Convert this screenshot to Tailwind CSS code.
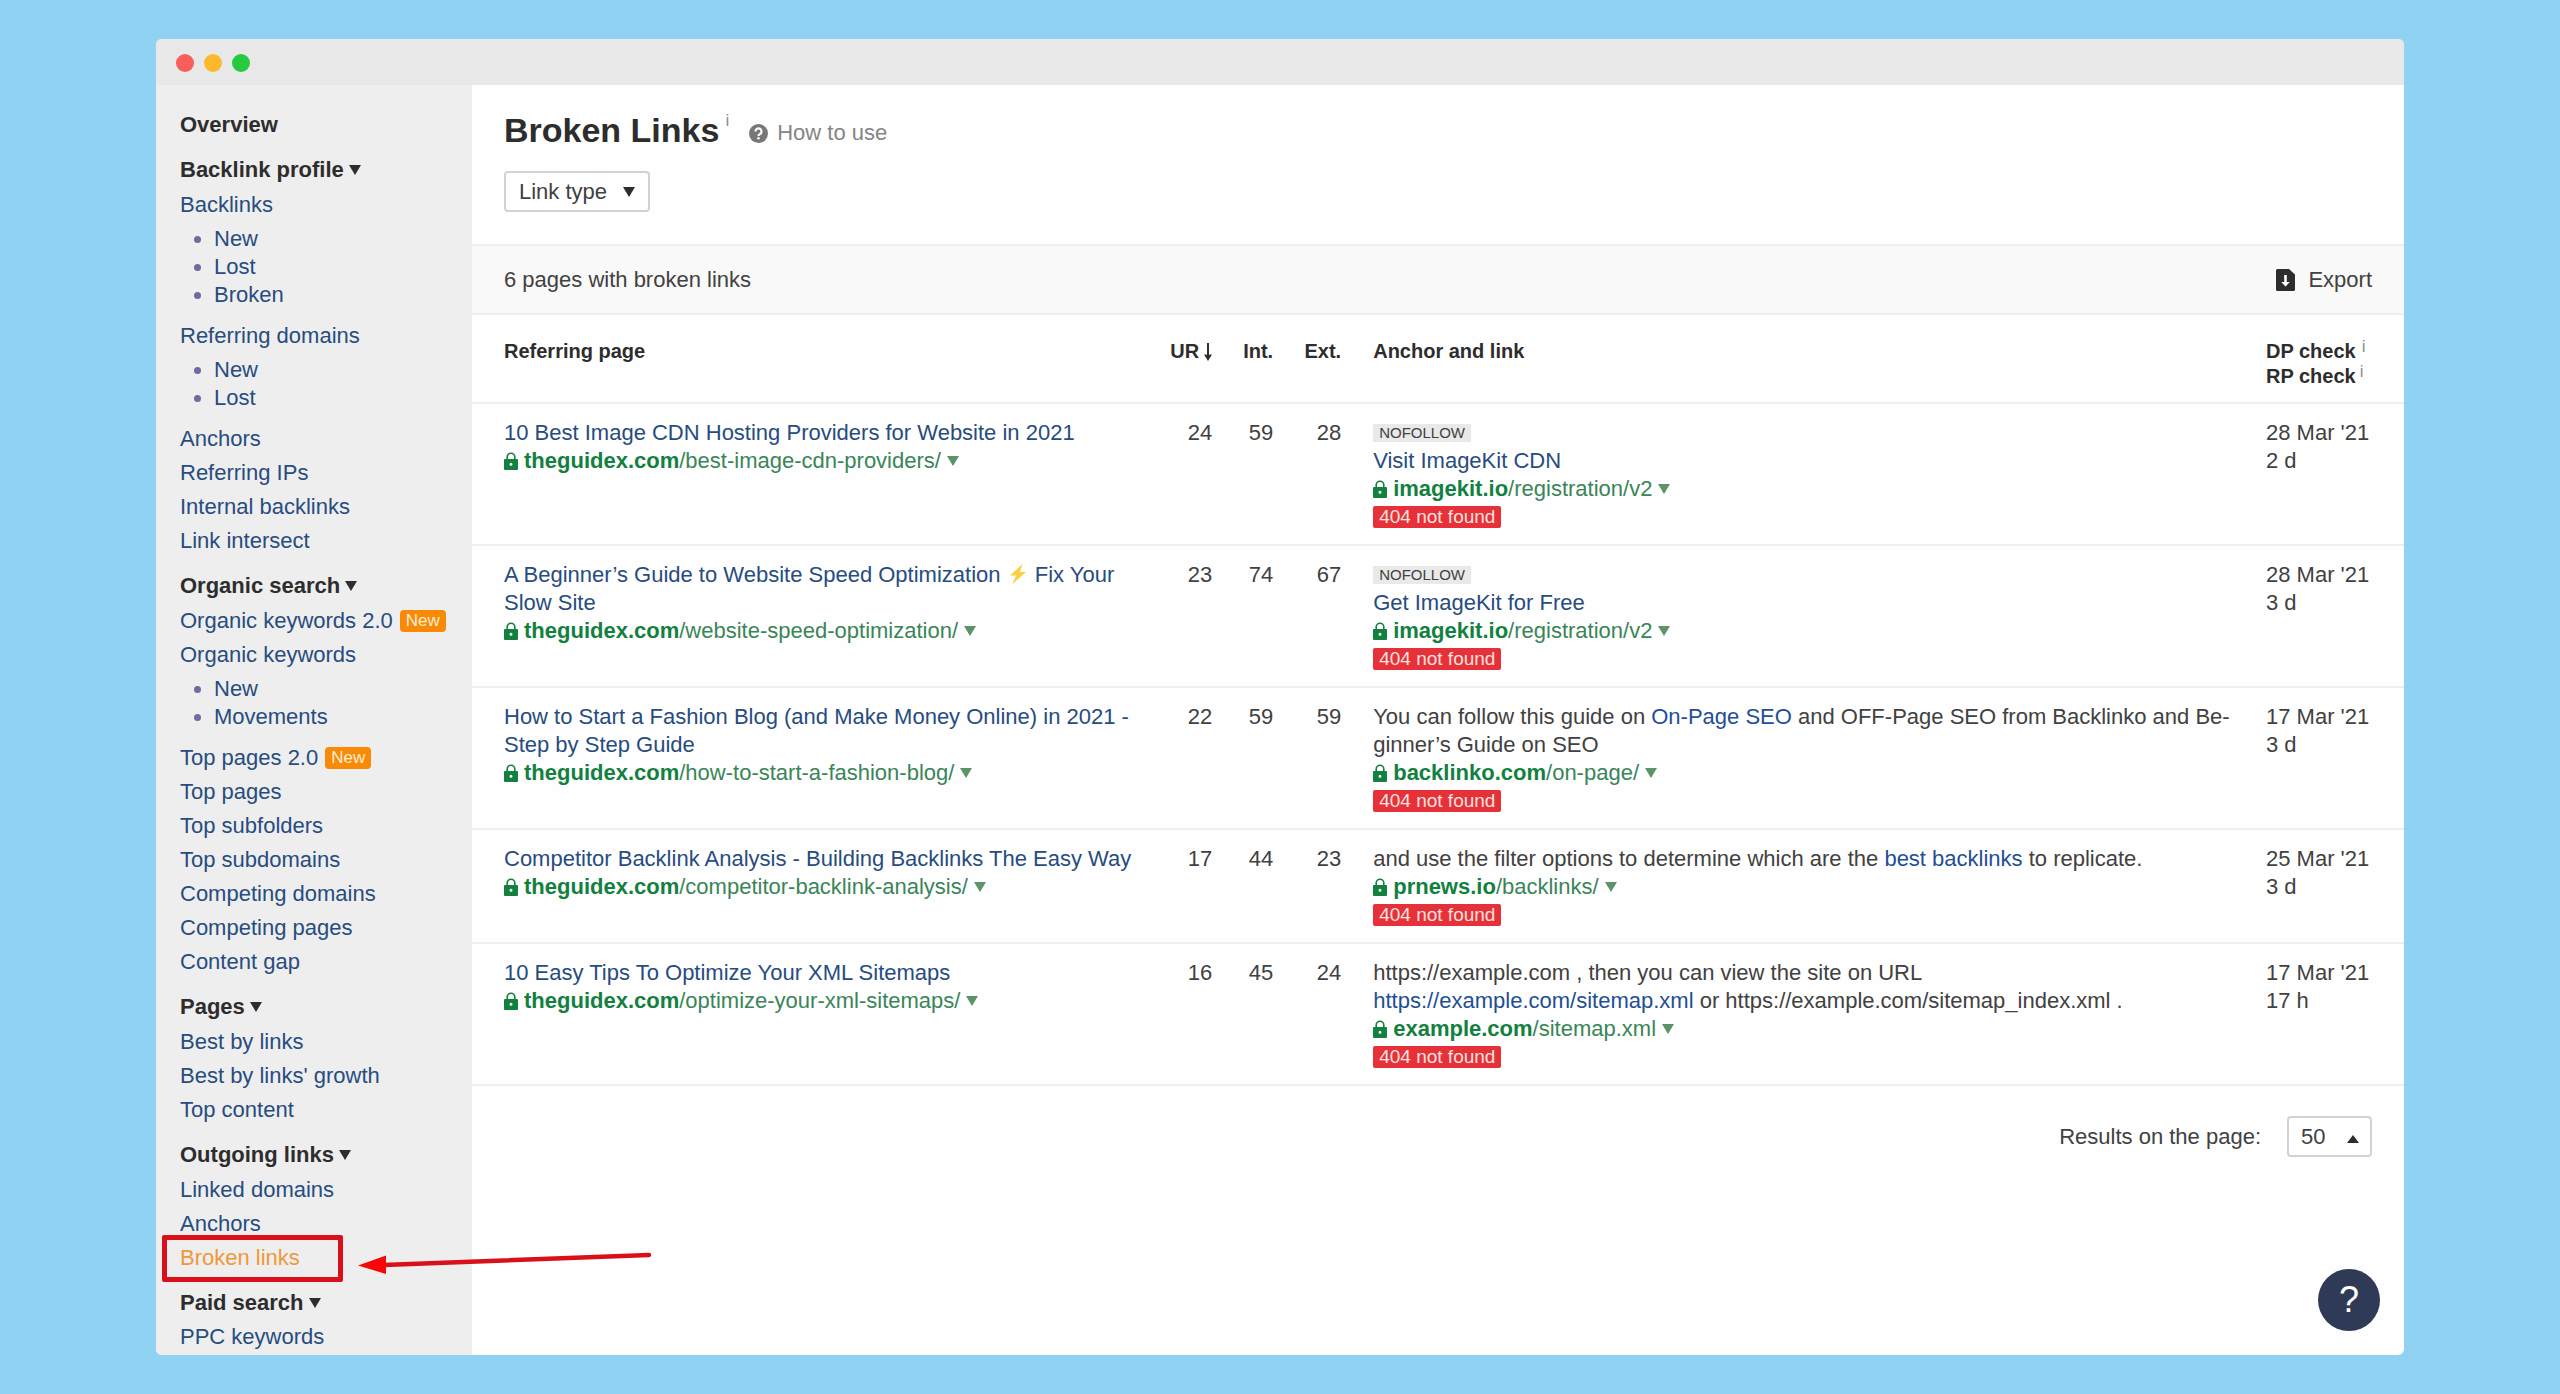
<!DOCTYPE html>
<html lang="en">
  <head>
    <meta charset="UTF-8" />
    <meta name="viewport" content="width=device-width, initial-scale=1.0" />
    <title>Broken Links</title>
    <script src="https://cdn.jsdelivr.net/npm/@tailwindcss/browser@4"></script>
  </head>
  <body class="bg-[#90d2f1] min-h-screen flex px-39 py-[39px] font-['Liberation_Sans',Arial,sans-serif] text-[22px] leading-7 text-[#414141]">
    <!-- Shared icons -->
    <svg class="hidden">
      <symbol id="lock" viewBox="0 0 14 18">
        <path d="M3.2 8V5a3.8 3.8 0 0 1 7.6 0v3" fill="none" stroke="currentColor" stroke-width="1.6" />
        <path fill-rule="evenodd" d="M1 7h12a1 1 0 0 1 1 1v9a1 1 0 0 1-1 1H1a1 1 0 0 1-1-1V8a1 1 0 0 1 1-1Zm6 3.8a1.5 1.5 0 1 0 0 3 1.5 1.5 0 0 0 0-3Z" fill="currentColor" />
      </symbol>
      <symbol id="down" viewBox="0 0 12 10">
        <path d="M0 0h12L6 10Z" fill="currentColor" />
      </symbol>
    </svg>

    <div class="flex-1 min-w-0 flex flex-col bg-[#fefefe] rounded-md overflow-hidden">
      <!-- Window bar -->
      <header class="h-[46px] shrink-0 bg-[#e8e8e8] flex items-center gap-[10px] pl-5 pt-[2px]">
        <span class="size-[18px] rounded-full bg-[#f95f5a]"></span>
        <span class="size-[18px] rounded-full bg-[#fcb92b]"></span>
        <span class="size-[18px] rounded-full bg-[#27c93f]"></span>
      </header>

      <div class="flex-1 flex">
        <!-- Sidebar -->
        <nav class="w-[316px] shrink-0 bg-[#eeeeee] pl-6 pt-[26px] flex flex-col gap-[17px] text-[#274c80] whitespace-nowrap">
          <a href="#" class="font-bold text-[#2d2d2d]">Overview</a>

          <section>
            <button class="font-bold text-[#2d2d2d] flex items-center gap-[5px] mb-[7px]">Backlink profile <svg class="w-3 h-2.5"><use href="#down" /></svg></button>
            <ul class="flex flex-col gap-1.5">
              <li>
                <a href="#">Backlinks</a>
                <ul class="mt-1.5 mb-[7px] pl-[34px] list-disc marker:text-[#6f6ba0]">
                  <li><a href="#">New</a></li>
                  <li><a href="#">Lost</a></li>
                  <li><a href="#">Broken</a></li>
                </ul>
              </li>
              <li>
                <a href="#">Referring domains</a>
                <ul class="mt-1.5 mb-[7px] pl-[34px] list-disc marker:text-[#6f6ba0]">
                  <li><a href="#">New</a></li>
                  <li><a href="#">Lost</a></li>
                </ul>
              </li>
              <li><a href="#">Anchors</a></li>
              <li><a href="#">Referring IPs</a></li>
              <li><a href="#">Internal backlinks</a></li>
              <li><a href="#">Link intersect</a></li>
            </ul>
          </section>

          <section>
            <button class="font-bold text-[#2d2d2d] flex items-center gap-[5px] mb-[7px]">Organic search <svg class="w-3 h-2.5"><use href="#down" /></svg></button>
            <ul class="flex flex-col gap-1.5">
              <li class="flex items-center gap-[7px]"><a href="#">Organic keywords 2.0</a><span class="bg-[#f98a07] text-[#ffeed2] text-[17px] leading-[22px] px-1.5 rounded">New</span></li>
              <li>
                <a href="#">Organic keywords</a>
                <ul class="mt-1.5 mb-[7px] pl-[34px] list-disc marker:text-[#6f6ba0]">
                  <li><a href="#">New</a></li>
                  <li><a href="#">Movements</a></li>
                </ul>
              </li>
              <li class="flex items-center gap-[7px]"><a href="#">Top pages 2.0</a><span class="bg-[#f98a07] text-[#ffeed2] text-[17px] leading-[22px] px-1.5 rounded">New</span></li>
              <li><a href="#">Top pages</a></li>
              <li><a href="#">Top subfolders</a></li>
              <li><a href="#">Top subdomains</a></li>
              <li><a href="#">Competing domains</a></li>
              <li><a href="#">Competing pages</a></li>
              <li><a href="#">Content gap</a></li>
            </ul>
          </section>

          <section>
            <button class="font-bold text-[#2d2d2d] flex items-center gap-[5px] mb-[7px]">Pages <svg class="w-3 h-2.5"><use href="#down" /></svg></button>
            <ul class="flex flex-col gap-1.5">
              <li><a href="#">Best by links</a></li>
              <li><a href="#">Best by links' growth</a></li>
              <li><a href="#">Top content</a></li>
            </ul>
          </section>

          <section>
            <button class="font-bold text-[#2d2d2d] flex items-center gap-[5px] mb-[7px]">Outgoing links <svg class="w-3 h-2.5"><use href="#down" /></svg></button>
            <ul class="flex flex-col gap-1.5">
              <li><a href="#">Linked domains</a></li>
              <li><a href="#">Anchors</a></li>
              <li class="relative">
                <a href="#" class="text-[#f0983a]">Broken links</a>
                <!-- Highlight box and arrow -->
                <span class="absolute -left-[18px] -top-[9px] w-[181px] h-[47px] border-[5px] border-[#d90f19] rounded-xs"></span>
                <svg class="absolute left-[178px] top-2 w-[296px] h-6" viewBox="0 0 296 24">
                  <path d="M26 13 291 3" stroke="#d90f19" stroke-width="4.500" stroke-linecap="round" />
                  <path d="M0 13.500 28 3.500v18.500Z" fill="#f80708" />
                </svg>
              </li>
            </ul>
          </section>

          <section>
            <button class="font-bold text-[#2d2d2d] flex items-center gap-[5px] mb-1.5">Paid search <svg class="w-3 h-2.5"><use href="#down" /></svg></button>
            <ul>
              <li><a href="#">PPC keywords</a></li>
            </ul>
          </section>
        </nav>

        <main class="flex-1 min-w-0 flex flex-col">
          <div class="px-8 pt-6 pb-8">
            <div class="flex items-center">
              <h1 class="text-[34px] leading-[42px] font-bold text-[#2d2d2d]">Broken Links</h1>
              <span class="self-start pt-0.5 pl-1.5 text-[17px] leading-5 text-[#8f8f8f]">i</span>
              <a href="#" class="ml-5 mt-1.5 flex items-center gap-[9px] text-[#858585]">
                <svg class="size-[19px]" viewBox="0 0 19 19">
                  <circle cx="9.500" cy="9.500" r="9.500" fill="#777" />
                  <path d="M6.500 7.400a3 3 0 1 1 4.500 2.600c-1 .6-1.500 1-1.500 2" fill="none" stroke="#fff" stroke-width="2.200" />
                  <circle cx="9.500" cy="14.300" r="1.300" fill="#fff" />
                </svg>
                How to use
              </a>
            </div>
            <button class="mt-5 h-[41px] flex items-center gap-4 pl-[13px] pr-[13px] border-2 border-[#d2d2d2] rounded bg-white">Link type <svg class="w-3 h-2.5 text-[#2d2d2d]"><use href="#down" /></svg></button>
          </div>

          <div class="h-[71px] px-8 flex items-center justify-between bg-[#f9f9f9] border-y-2 border-[#eeeeee]">
            <span>6 pages with broken links</span>
            <button class="flex items-center gap-[13px]">
              <svg class="w-[19px] h-[22px]" viewBox="0 0 19 22">
                <path d="M1.500 0H13l6 5.500v15a1.500 1.500 0 0 1-1.500 1.500h-16A1.500 1.500 0 0 1 0 20.500v-19A1.500 1.500 0 0 1 1.500 0Z" fill="#2d2d2d" />
                <path d="M8.200 6h2.600v7h3l-4.300 4.500L5.200 13h3Z" fill="#fff" />
              </svg>
              Export
            </button>
          </div>

          <table class="table-fixed w-full text-left">
            <colgroup>
              <col class="w-[35%]" />
              <col class="w-16" />
              <col class="w-[61px]" />
              <col class="w-[68px]" />
              <col />
              <col class="w-[138px]" />
            </colgroup>
            <thead class="text-xl leading-[25px] text-[#2d2d2d]">
              <tr class="h-[88px] align-top border-b-2 border-[#eeeeee]">
                <th class="pt-6 pl-8">Referring page</th>
                <th class="pt-6">
                  <span class="flex items-center justify-end gap-[5px]">UR
                    <svg class="w-2 h-[18px]" viewBox="0 0 8 18"><path d="M4 0v14" stroke="currentColor" stroke-width="2" /><path d="M0 11.500c2 0 3 .5 4 .5s2-.5 4-.5L4 18Z" fill="currentColor" /></svg>
                  </span>
                </th>
                <th class="pt-6 text-right">Int.</th>
                <th class="pt-6 text-right">Ext.</th>
                <th class="pt-6 pl-8">Anchor and link</th>
                <th class="pt-6 whitespace-nowrap">
                  <div class="flex gap-1.5">DP check <span class="text-[17px] leading-4 font-normal text-[#8f8f8f]">i</span></div>
                  <div class="flex gap-1">RP check <span class="text-[17px] leading-4 font-normal text-[#8f8f8f]">i</span></div>
                </th>
              </tr>
            </thead>
            <tbody>
              <tr class="align-top border-b-2 border-[#eeeeee]">
                <td class="pt-[15px] pb-[13px] pl-8 pr-2">
                  <a href="#" class="text-[#274c80]">10 Best Image CDN Hosting Providers for Website in 2021</a>
                  <div class="flex items-center text-[#3a8558]"><svg class="w-3.5 h-[18px] mr-1.5 text-[#12813f]"><use href="#lock" /></svg><a href="#"><b class="text-[#12813f]">theguidex.com</b>/best-image-cdn-providers/</a><svg class="w-3 h-2.5 ml-1.5 text-[#5c9467]"><use href="#down" /></svg></div>
                </td>
                <td class="pt-[15px] pb-[13px] text-right">24</td>
                <td class="pt-[15px] pb-[13px] text-right">59</td>
                <td class="pt-[15px] pb-[13px] text-right">28</td>
                <td class="pt-[15px] pb-[13px] pl-8 pr-8">
                  <div class="h-7 flex items-center"><span class="bg-[#e9e9e9] text-[15px] leading-[18px] px-1.5">NOFOLLOW</span></div>
                  <a href="#" class="text-[#274c80]">Visit ImageKit CDN</a>
                  <div class="flex items-center text-[#3a8558]"><svg class="w-3.5 h-[18px] mr-1.5 text-[#12813f]"><use href="#lock" /></svg><a href="#"><b class="text-[#12813f]">imagekit.io</b>/registration/v2</a><svg class="w-3 h-2.5 ml-1.5 text-[#5c9467]"><use href="#down" /></svg></div>
                  <div class="h-7 flex items-center"><span class="bg-[#e6303a] text-[#ffe3de] text-[19px] leading-[22px] px-1.5 rounded-xs">404 not found</span></div>
                </td>
                <td class="pt-[15px] pb-[13px]">28 Mar '21<br />2 d</td>
              </tr>
              <tr class="align-top border-b-2 border-[#eeeeee]">
                <td class="pt-[15px] pb-[13px] pl-8 pr-2">
                  <a href="#" class="text-[#274c80]">A Beginner’s Guide to Website Speed Optimization <svg class="inline mx-0.5 w-[18px] h-5 align-[-2px]" viewBox="0 0 18 20"><path d="M13.500 0 1 11.500h6L3.500 20 17 8h-6Z" fill="#f8cf45" /></svg> Fix Your Slow Site</a>
                  <div class="flex items-center text-[#3a8558]"><svg class="w-3.5 h-[18px] mr-1.5 text-[#12813f]"><use href="#lock" /></svg><a href="#"><b class="text-[#12813f]">theguidex.com</b>/website-speed-optimization/</a><svg class="w-3 h-2.5 ml-1.5 text-[#5c9467]"><use href="#down" /></svg></div>
                </td>
                <td class="pt-[15px] pb-[13px] text-right">23</td>
                <td class="pt-[15px] pb-[13px] text-right">74</td>
                <td class="pt-[15px] pb-[13px] text-right">67</td>
                <td class="pt-[15px] pb-[13px] pl-8 pr-8">
                  <div class="h-7 flex items-center"><span class="bg-[#e9e9e9] text-[15px] leading-[18px] px-1.5">NOFOLLOW</span></div>
                  <a href="#" class="text-[#274c80]">Get ImageKit for Free</a>
                  <div class="flex items-center text-[#3a8558]"><svg class="w-3.5 h-[18px] mr-1.5 text-[#12813f]"><use href="#lock" /></svg><a href="#"><b class="text-[#12813f]">imagekit.io</b>/registration/v2</a><svg class="w-3 h-2.5 ml-1.5 text-[#5c9467]"><use href="#down" /></svg></div>
                  <div class="h-7 flex items-center"><span class="bg-[#e6303a] text-[#ffe3de] text-[19px] leading-[22px] px-1.5 rounded-xs">404 not found</span></div>
                </td>
                <td class="pt-[15px] pb-[13px]">28 Mar '21<br />3 d</td>
              </tr>
              <tr class="align-top border-b-2 border-[#eeeeee]">
                <td class="pt-[15px] pb-[13px] pl-8 pr-2">
                  <a href="#" class="text-[#274c80]">How to Start a Fashion Blog (and Make Money Online) in 2021 - Step by Step Guide</a>
                  <div class="flex items-center text-[#3a8558]"><svg class="w-3.5 h-[18px] mr-1.5 text-[#12813f]"><use href="#lock" /></svg><a href="#"><b class="text-[#12813f]">theguidex.com</b>/how-to-start-a-fashion-blog/</a><svg class="w-3 h-2.5 ml-1.5 text-[#5c9467]"><use href="#down" /></svg></div>
                </td>
                <td class="pt-[15px] pb-[13px] text-right">22</td>
                <td class="pt-[15px] pb-[13px] text-right">59</td>
                <td class="pt-[15px] pb-[13px] text-right">59</td>
                <td class="pt-[15px] pb-[13px] pl-8 pr-8">
                  You can follow this guide on <a href="#" class="text-[#1f4f96]">On-Page SEO</a> and OFF-Page SEO from Backlinko and Be&shy;ginner’s Guide on SEO
                  <div class="flex items-center text-[#3a8558]"><svg class="w-3.5 h-[18px] mr-1.5 text-[#12813f]"><use href="#lock" /></svg><a href="#"><b class="text-[#12813f]">backlinko.com</b>/on-page/</a><svg class="w-3 h-2.5 ml-1.5 text-[#5c9467]"><use href="#down" /></svg></div>
                  <div class="h-7 flex items-center"><span class="bg-[#e6303a] text-[#ffe3de] text-[19px] leading-[22px] px-1.5 rounded-xs">404 not found</span></div>
                </td>
                <td class="pt-[15px] pb-[13px]">17 Mar '21<br />3 d</td>
              </tr>
              <tr class="align-top border-b-2 border-[#eeeeee]">
                <td class="pt-[15px] pb-[13px] pl-8 pr-2">
                  <a href="#" class="text-[#274c80]">Competitor Backlink Analysis - Building Backlinks The Easy Way</a>
                  <div class="flex items-center text-[#3a8558]"><svg class="w-3.5 h-[18px] mr-1.5 text-[#12813f]"><use href="#lock" /></svg><a href="#"><b class="text-[#12813f]">theguidex.com</b>/competitor-backlink-analysis/</a><svg class="w-3 h-2.5 ml-1.5 text-[#5c9467]"><use href="#down" /></svg></div>
                </td>
                <td class="pt-[15px] pb-[13px] text-right">17</td>
                <td class="pt-[15px] pb-[13px] text-right">44</td>
                <td class="pt-[15px] pb-[13px] text-right">23</td>
                <td class="pt-[15px] pb-[13px] pl-8 pr-8">
                  and use the filter options to determine which are the <a href="#" class="text-[#1f4f96]">best backlinks</a> to replicate.
                  <div class="flex items-center text-[#3a8558]"><svg class="w-3.5 h-[18px] mr-1.5 text-[#12813f]"><use href="#lock" /></svg><a href="#"><b class="text-[#12813f]">prnews.io</b>/backlinks/</a><svg class="w-3 h-2.5 ml-1.5 text-[#5c9467]"><use href="#down" /></svg></div>
                  <div class="h-7 flex items-center"><span class="bg-[#e6303a] text-[#ffe3de] text-[19px] leading-[22px] px-1.5 rounded-xs">404 not found</span></div>
                </td>
                <td class="pt-[15px] pb-[13px]">25 Mar '21<br />3 d</td>
              </tr>
              <tr class="align-top border-b-2 border-[#eeeeee]">
                <td class="pt-[15px] pb-[13px] pl-8 pr-2">
                  <a href="#" class="text-[#274c80]">10 Easy Tips To Optimize Your XML Sitemaps</a>
                  <div class="flex items-center text-[#3a8558]"><svg class="w-3.5 h-[18px] mr-1.5 text-[#12813f]"><use href="#lock" /></svg><a href="#"><b class="text-[#12813f]">theguidex.com</b>/optimize-your-xml-sitemaps/</a><svg class="w-3 h-2.5 ml-1.5 text-[#5c9467]"><use href="#down" /></svg></div>
                </td>
                <td class="pt-[15px] pb-[13px] text-right">16</td>
                <td class="pt-[15px] pb-[13px] text-right">45</td>
                <td class="pt-[15px] pb-[13px] text-right">24</td>
                <td class="pt-[15px] pb-[13px] pl-8 pr-8">
                  https://example.com , then you can view the site on URL<br />
                  <a href="#" class="text-[#1f4f96]">https://example.com/sitemap.xml</a> or https://example.com/sitemap_index.xml .
                  <div class="flex items-center text-[#3a8558]"><svg class="w-3.5 h-[18px] mr-1.5 text-[#12813f]"><use href="#lock" /></svg><a href="#"><b class="text-[#12813f]">example.com</b>/sitemap.xml</a><svg class="w-3 h-2.5 ml-1.5 text-[#5c9467]"><use href="#down" /></svg></div>
                  <div class="h-7 flex items-center"><span class="bg-[#e6303a] text-[#ffe3de] text-[19px] leading-[22px] px-1.5 rounded-xs">404 not found</span></div>
                </td>
                <td class="pt-[15px] pb-[13px]">17 Mar '21<br />17 h</td>
              </tr>
            </tbody>
          </table>

          <div class="flex items-center justify-end gap-[26px] px-8 pt-[30px]">
            <label for="pageSize">Results on the page:</label>
            <div class="relative">
              <select id="pageSize" class="block appearance-none w-[85px] h-[41px] pl-3 border-2 border-[#d2d2d2] rounded bg-white">
                <option>50</option>
                <option>100</option>
              </select>
              <svg class="absolute right-[13px] top-[19px] w-3 h-2 pointer-events-none" viewBox="0 0 12 8"><path d="M0 8h12L6 0Z" fill="#2d2d2d" /></svg>
            </div>
          </div>

          <button aria-label="Help" class="mt-auto ml-auto mr-6 mb-6 size-[62px] rounded-full bg-[#2e3a56] text-white text-4xl">?</button>
        </main>
      </div>
    </div>
  </body>
</html>
